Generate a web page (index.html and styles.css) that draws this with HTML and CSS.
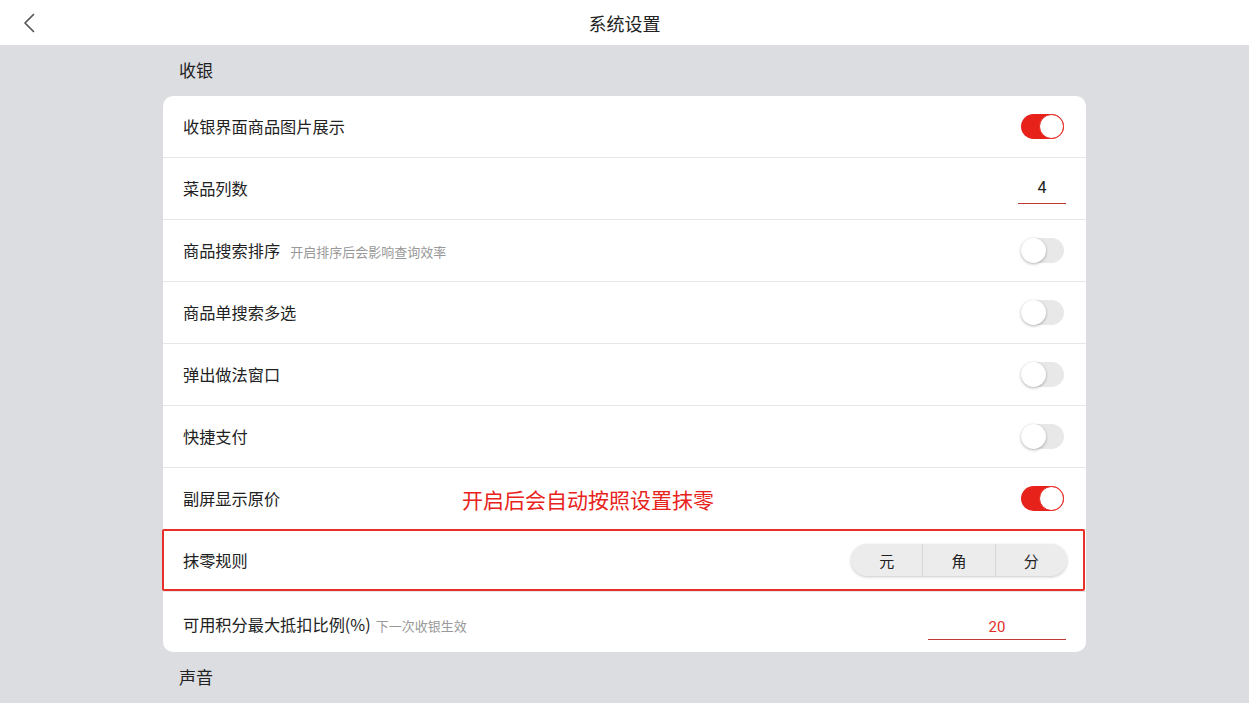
FILE: index.html
```html
<!DOCTYPE html>
<html lang="zh">
<head>
<meta charset="utf-8">
<link rel="stylesheet" href="styles.css">
</head>
<body>
<header class="topbar">
  <span class="back"><svg width="14" height="22" viewBox="0 0 14 22"><path d="M11.5 2.5 L3 11 L11.5 19.5" fill="none" stroke="#555" stroke-width="1.7" stroke-linecap="round" stroke-linejoin="round"/></svg></span>
  <h1 class="title">系统设置</h1>
</header>
<main class="content">
  <div class="section-title">收银</div>
  <div class="card">
    <div class="row"><span class="label">收银界面商品图片展示</span><span class="toggle on"><span class="knob"></span></span></div>
    <div class="row"><span class="label">菜品列数</span><span class="num-input small">4</span></div>
    <div class="row"><span class="label">商品搜索排序<span class="hint">开启排序后会影响查询效率</span></span><span class="toggle"><span class="knob"></span></span></div>
    <div class="row"><span class="label">商品单搜索多选</span><span class="toggle"><span class="knob"></span></span></div>
    <div class="row"><span class="label">弹出做法窗口</span><span class="toggle"><span class="knob"></span></span></div>
    <div class="row"><span class="label">快捷支付</span><span class="toggle"><span class="knob"></span></span></div>
    <div class="row"><span class="label">副屏显示原价</span><span class="annot">开启后会自动按照设置抹零</span><span class="toggle on"><span class="knob"></span></span></div>
    <div class="row highlight"><span class="label">抹零规则</span>
      <div class="seg"><span class="seg-item">元</span><span class="seg-item">角</span><span class="seg-item">分</span></div>
      <span class="redbox"></span>
    </div>
    <div class="row last"><span class="label">可用积分最大抵扣比例(%)<span class="hint tight">下一次收银生效</span></span><span class="num-input wide">20</span></div>
  </div>
  <div class="section-title second">声音</div>
</main>
</body>
</html>
```
FILE: styles.css
```css
* { box-sizing: border-box; }
html, body { margin: 0; padding: 0; }
body {
  width: 1249px;
  height: 703px;
  overflow: hidden;
  background: #dcdde0;
  font-family: "Noto Sans CJK SC", "Noto Sans", sans-serif;
  color: #222;
}
.topbar {
  height: 45px;
  background: #fff;
  display: flex;
  align-items: center;
  justify-content: center;
  position: relative;
}
.back {
  position: absolute;
  left: 22px;
  top: 12px;
  display: flex;
}
.title {
  margin: 0;
  font-size: 18px;
  font-weight: 400;
  color: #222;
}
.content {
  width: 923px;
  margin: 0 0 0 163px;
}
.section-title {
  font-size: 17px;
  color: #222;
  padding-left: 16px;
  height: 51px;
  line-height: 49px;
}
.section-title.second {
  height: 50px;
  line-height: 50px;
}
.card {
  background: #fff;
  border-radius: 10px;
}
.row {
  position: relative;
  height: 62px;
  display: flex;
  align-items: center;
  justify-content: space-between;
  padding: 0 22px 1px 20px;
  border-bottom: 1px solid #e6e6e6;
}
.row.last { border-bottom: none; height: 60px; padding-top: 4px; }
.label {
  font-size: 16.2px;
  color: #222;
  display: flex;
  align-items: center;
}
.hint {
  font-size: 13px;
  color: #999;
  margin-left: 10px;
  margin-top: 3px;
}
.hint.tight { margin-left: 5px; }
.toggle {
  width: 43px;
  height: 25px;
  border-radius: 13px;
  background: #e8e8e8;
  position: relative;
  display: block;
}
.toggle .knob {
  position: absolute;
  left: 0;
  top: 0;
  width: 25px;
  height: 25px;
  border-radius: 50%;
  background: #fff;
  box-shadow: 0 1px 3px rgba(0,0,0,0.3);
}
.toggle.on { background: #e6221b; }
.toggle.on .knob {
  left: 18px;
  border: 1px solid #e6221b;
  box-shadow: none;
}
.num-input {
  font-family: "Roboto", "Noto Sans", sans-serif;
  font-size: 16px;
  text-align: center;
  border-bottom: 1px solid #c23b3b;
  padding-bottom: 6px;
  margin-top: 5px;
}
.num-input.small { width: 48px; margin-right: -2px; color: #222; }
.num-input.wide { width: 138px; margin-right: -2px; color: #e0302a; font-size: 15px; padding-bottom: 3px; margin-top: 10px; }
.annot {
  position: absolute;
  left: 299px;
  top: 16px;
  font-size: 21px;
  color: #e8231c;
}
.seg {
  display: flex;
  width: 216px;
  height: 32px;
  border-radius: 16px;
  background: #ececec;
  box-shadow: 0 1px 3px rgba(0,0,0,0.22);
  overflow: hidden;
  margin-right: -3px;
}
.seg-item {
  flex: 1;
  display: flex;
  align-items: center;
  justify-content: center;
  font-size: 15px;
  color: #222;
  border-left: 1px solid #d6d6d6;
}
.seg-item:first-child { border-left: none; }
.redbox {
  position: absolute;
  left: -1px;
  top: -1px;
  right: 1px;
  height: 62px;
  border: 2.5px solid #e8302a;
  border-radius: 2px;
  pointer-events: none;
}
```
